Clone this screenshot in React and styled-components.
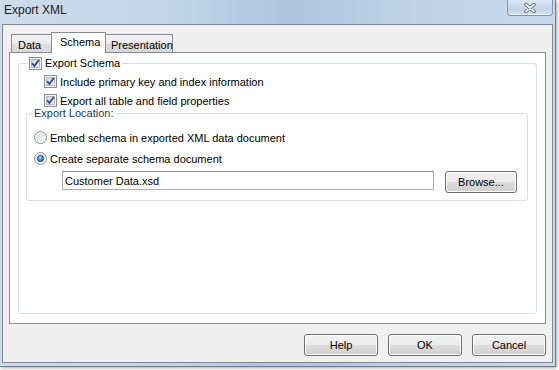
import React from "react";
import styled, { createGlobalStyle } from "styled-components";

const FONT = `"Liberation Sans", Arial, sans-serif`;

const GlobalStyle = createGlobalStyle`
  html, body {
    margin: 0;
    padding: 0;
  }
  body {
    width: 559px;
    height: 370px;
    overflow: hidden;
    background: #ffffff;
    font-family: ${FONT};
    font-size: 11px;
    color: #000;
  }
`;

const Window = styled.div`
  width: 556px;
  height: 367px;
  box-sizing: border-box;
  padding: 0 2px 3px 2px;
  border-right: 1px solid #6d7f93;
  border-bottom: 1px solid #6d7f93;
  background: linear-gradient(
    90deg,
    #cddcec 0%,
    #c2d5ea 30%,
    #adc5df 52%,
    #bfd2e7 75%,
    #c8d9ec 100%
  );
  box-shadow: 1px 1px 3px rgba(0, 0, 0, 0.35);
  display: flex;
  flex-direction: column;
`;

const TitleBar = styled.div`
  height: 24px;
  display: flex;
  justify-content: space-between;
  align-items: flex-start;
  flex-shrink: 0;
`;

const Title = styled.div`
  padding: 3px 0 0 2px;
  font-size: 12px;
  line-height: 15px;
  color: #1b1b1b;
`;

const CloseButton = styled.div`
  width: 46px;
  height: 16px;
  box-sizing: border-box;
  border: 1px solid #7f94ae;
  border-top: none;
  border-radius: 0 0 4px 4px;
  background: linear-gradient(#dbe6f2, #c3d4e7 60%, #d3e0ee);
  box-shadow: inset 0 -1px 0 rgba(255, 255, 255, 0.6);
  display: flex;
  align-items: center;
  justify-content: center;
`;

const Client = styled.div`
  flex: 1;
  border: 1px solid #7d8895;
  background: #f0f0f0;
  display: flex;
  flex-direction: column;
  padding: 7px 6px 0 6px;
`;

const TabStrip = styled.div`
  height: 20px;
  display: flex;
  align-items: flex-end;
  padding-left: 2px;
`;

const Tab = styled.div`
  position: relative;
  box-sizing: border-box;
  height: ${(p) => (p.$active ? "21px" : "18px")};
  margin: ${(p) => (p.$active ? "0 -2px -1px -2px" : "0")};
  z-index: ${(p) => (p.$active ? 1 : 0)};
  width: ${(p) => p.$w}px;
  border: 1px solid #898c95;
  border-bottom: none;
  background: ${(p) =>
    p.$active ? "#ffffff" : "linear-gradient(#f3f3f3, #ebebeb 50%, #dedede 50%, #d9d9d9)"};
  padding: ${(p) => (p.$active ? "3px 0 0 8px" : "4px 0 0 6px")};
  line-height: 13px;
  white-space: nowrap;
  color: #000;
`;

const TabPage = styled.div`
  height: 272px;
  box-sizing: border-box;
  border: 1px solid #898c95;
  background: #ffffff;
  display: flex;
  flex-direction: column;
  padding: 3px 8px 9px 8px;
`;

const GroupBox = styled.fieldset`
  margin: 0;
  min-width: 0;
  border: 1px solid #d5dfe5;
  border-radius: 3px;
  padding: ${(p) => p.$pad};
  flex: ${(p) => (p.$grow ? 1 : "none")};
  margin-top: ${(p) => p.$top || 0}px;
`;

const Legend = styled.legend`
  display: flex;
  align-items: center;
  gap: 3px;
  height: ${(p) => p.$h}px;
  line-height: ${(p) => p.$h}px;
  padding: 0 2px 0 ${(p) => p.$pl}px;
  margin-left: ${(p) => p.$ml}px;
  color: ${(p) => p.$color || "#000"};
`;

const OptionRow = styled.div`
  display: flex;
  align-items: center;
  gap: 3px;
  height: ${(p) => p.$h}px;
  margin-left: ${(p) => p.$indent || 0}px;
  margin-top: ${(p) => p.$top || 0}px;
`;

const FileRow = styled.div`
  display: flex;
  align-items: flex-start;
  gap: 11px;
  margin: 2px 0 0 28px;
`;

const TextBox = styled.input`
  width: 372px;
  height: 19px;
  box-sizing: border-box;
  border: 1px solid #abadb3;
  border-top-color: #8e9198;
  padding: 0 0 0 2px;
  margin: 0;
  font-family: ${FONT};
  font-size: 11px;
  color: #000;
  background: #fff;
  outline: none;
`;

const Button = styled.button`
  width: ${(p) => p.$w || 74}px;
  height: 22px;
  box-sizing: border-box;
  margin: 0;
  padding: 0;
  border: 1px solid #707070;
  border-radius: 3px;
  background: linear-gradient(#f2f2f2 0%, #ebebeb 48%, #dddddd 52%, #cfcfcf 100%);
  box-shadow: inset 0 0 0 1px #fbfbfb;
  font-family: ${FONT};
  font-size: 11px;
  color: #000;
`;

const ButtonRow = styled.div`
  display: flex;
  justify-content: flex-end;
  gap: 10px;
  margin-top: 10px;
`;

const CheckBox = () => (
  <svg width="13" height="13" viewBox="0 0 13 13">
    <defs>
      <linearGradient id="cbIn" x1="0" y1="0" x2="1" y2="1">
        <stop offset="0" stopColor="#cdd4de" />
        <stop offset="1" stopColor="#f6f8fb" />
      </linearGradient>
    </defs>
    <rect x="0.5" y="0.5" width="12" height="12" fill="#f6f6f6" stroke="#8e8f8f" />
    <rect x="2.5" y="2.5" width="8" height="8" fill="url(#cbIn)" stroke="#b0b6bf" />
    <path d="M3.2 6.3 L5.4 9 L9.8 3" fill="none" stroke="#2b4889" strokeWidth="1.8" />
  </svg>
);

const Radio = ({ checked }) => (
  <svg width="13" height="13" viewBox="0 0 13 13">
    <defs>
      <linearGradient id="rdOut" x1="0" y1="0" x2="1" y2="1">
        <stop offset="0" stopColor="#d7d9dc" />
        <stop offset="1" stopColor="#fbfbfb" />
      </linearGradient>
      <radialGradient id="rdDot" cx="0.45" cy="0.4" r="0.6">
        <stop offset="0" stopColor="#b9e0fb" />
        <stop offset="0.45" stopColor="#4b9ad8" />
        <stop offset="1" stopColor="#1b4c82" />
      </radialGradient>
    </defs>
    <circle cx="6.5" cy="6.5" r="6" fill="#f4f4f4" stroke="#8e8f8f" />
    <circle cx="6.5" cy="6.5" r="4.2" fill="url(#rdOut)" />
    {checked && <circle cx="6.5" cy="6.5" r="3.3" fill="url(#rdDot)" stroke="#2b5a8f" strokeWidth="0.6" />}
  </svg>
);

const CloseGlyph = () => (
  <svg width="12" height="10" viewBox="0 0 12 10">
    <path d="M2 1.5 L10 8.5 M10 1.5 L2 8.5" stroke="#4d5a68" strokeWidth="3.4" strokeLinecap="round" />
    <path d="M2 1.5 L10 8.5 M10 1.5 L2 8.5" stroke="#f4f7fa" strokeWidth="1.8" strokeLinecap="round" />
  </svg>
);

export default function App() {
  return (
    <>
      <GlobalStyle />
      <Window>
        <TitleBar>
          <Title>Export XML</Title>
          <CloseButton>
            <CloseGlyph />
          </CloseButton>
        </TitleBar>
        <Client>
          <TabStrip>
            <Tab $w={42}>Data</Tab>
            <Tab $w={55} $active>
              Schema
            </Tab>
            <Tab $w={69}>Presentation</Tab>
          </TabStrip>
          <TabPage>
            <GroupBox $grow $pad="0 8px 0 7px">
              <Legend $h={15} $pl={1} $ml={2}>
                <CheckBox />
                Export Schema
              </Legend>
              <OptionRow $h={19} $indent={18} $top={1}>
                <CheckBox />
                Include primary key and index information
              </OptionRow>
              <OptionRow $h={19} $indent={18}>
                <CheckBox />
                Export all table and field properties
              </OptionRow>
              <GroupBox $pad="0 8px 7px 7px" $top={-3}>
                <Legend $h={13} $pl={2} $ml={-2} $color="#1e395b">
                  Export Location:
                </Legend>
                <OptionRow $h={21} $top={7}>
                  <Radio />
                  Embed schema in exported XML data document
                </OptionRow>
                <OptionRow $h={21}>
                  <Radio checked />
                  Create separate schema document
                </OptionRow>
                <FileRow>
                  <TextBox defaultValue="Customer Data.xsd" readOnly />
                  <Button $w={72}>Browse...</Button>
                </FileRow>
              </GroupBox>
            </GroupBox>
          </TabPage>
          <ButtonRow>
            <Button>Help</Button>
            <Button>OK</Button>
            <Button>Cancel</Button>
          </ButtonRow>
        </Client>
      </Window>
    </>
  );
}
